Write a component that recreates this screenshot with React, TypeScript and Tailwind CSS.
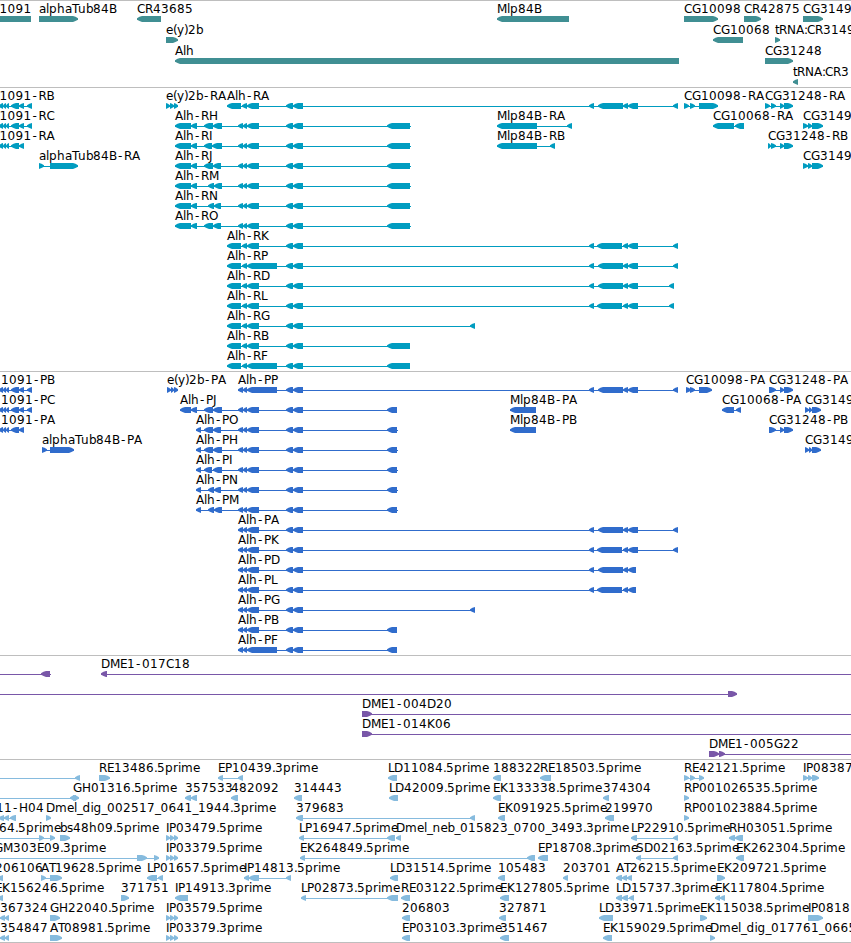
import React from 'react';

type Block = [number, number];

interface Feature {
  name?: string;
  dir: 'l' | 'r';
  blocks: Block[];
  // connector extent, when it runs past the blocks
  from?: number;
  to?: number;
  labelX?: number;
}

interface Track {
  id: string;
  color: string;
  rowClass: string;
  padClass: string;
  rows: Feature[][];
}

const WIDTH = 851;

// glyph advances for the 12px label font
const ADVANCES: Record<string, number> = {
  A: 8, B: 8, C: 8, D: 9, E: 7, F: 7, G: 9, H: 9, I: 3, J: 4, K: 8, L: 6, M: 10,
  N: 9, O: 9, P: 7, R: 8, S: 8, T: 6, a: 7, b: 7, d: 8, e: 7, g: 8, h: 8, i: 3,
  l: 3, m: 12, n: 8, p: 8, r: 5, s: 6, t: 4, u: 8, y: 7, '-': 7, '_': 5.5, '.': 3,
  ':': 3, '(': 4, ')': 4,
};

function glyphPositions(text: string, start: number) {
  const xs: number[] = [];
  let x = start;
  for (const ch of text) {
    // the hyphen sits in the middle of its wide cell
    xs.push(ch === '-' ? x + 1 : x);
    x += ADVANCES[ch] ?? 8;
  }
  return xs.join(' ');
}

const left = (name: string, ...blocks: Block[]): Feature => ({ name, dir: 'l', blocks });
const right = (name: string, ...blocks: Block[]): Feature => ({ name, dir: 'r', blocks });

// shared exons
const MID: Block[] = [[286, 293], [293, 303]];
const INNER: Block[] = [[238, 243], [243, 247], [247, 259], ...MID];
const INNER_LONG: Block[] = [[238, 243], [243, 247], [247, 277], ...MID];
const HEAD: Block[] = [[227, 241], [242, 247], [247, 259], ...MID];
const HEAD_LONG: Block[] = [[227, 241], [242, 247], [247, 277], ...MID];
const FAR_A: Block[] = [[589, 594], [598, 623], [623, 628], [628, 638]];
const FAR_B: Block[] = [[589, 594], [597, 622], [623, 628], [628, 638]];
const FAR_A_CDS: Block[] = [[589, 594], [598, 623], [623, 628], [628, 636]];
const FAR_B_CDS: Block[] = [[589, 594], [597, 622], [623, 628], [628, 636]];
const CG1091: Block[] = [[-1, 3], [3, 6], [6, 9], [11, 19], [19, 24]];
const EY2B: Block[] = [[166, 170], [170, 174], [174, 178]];

const gene1091 = (name: string, labelX: number, long: boolean): Feature => ({
  name,
  dir: 'l',
  blocks: long ? [...CG1091, [27, 32]] : CG1091,
  labelX,
});

const alhR = (name: string, a: Block, b: Block): Feature => ({
  name,
  dir: 'l',
  blocks: [[175, 191], [191, 197], a, b, ...INNER, [387, 410]],
  to: 411,
});

const alhP = (name: string, a: Block, b: Block): Feature => ({
  name,
  dir: 'l',
  blocks: [[196, 201], a, b, ...INNER, [387, 397]],
  to: 398,
});

const genes: Feature[][] = [
  [
    { name: '1091', dir: 'l', blocks: [[-20, 31]], labelX: -0.5 },
    right('alphaTub84B', [39, 78]),
    left('CR43685', [137, 161]),
    left('Mlp84B', [497, 569]),
    right('CG10098', [684, 718]),
    right('CR42875', [744, 761]),
    right('CG3149', [803, 823]),
  ],
  [right('e(y)2b', [166, 178]), left('CG10068', [713, 743]), right('tRNA:CR3149', [775, 780])],
  [left('Alh', [175, 679]), right('CG31248', [765, 793])],
  [left('tRNA:CR3', [793, 798])],
];

const transcripts: Feature[][] = [
  [
    gene1091('1091-RB', -0.5, true),
    right('e(y)2b-RA', ...EY2B),
    left('Alh-RA', ...HEAD, ...FAR_A, [673, 678]),
    right('CG10098-RA', [684, 689], [690, 695], [699, 718]),
    right('CG31248-RA', [765, 770], [771, 776], [780, 784], [784, 793]),
  ],
  [
    gene1091('1091-RC', -0.5, true),
    alhR('Alh-RH', [204, 213], [213, 222]),
    left('Mlp84B-RA', [497, 537], [567, 572]),
    left('CG10068-RA', [713, 734], [735, 744]),
    right('CG3149', [803, 808], [808, 812], [812, 823]),
  ],
  [
    gene1091('1091-RA', -0.5, false),
    alhR('Alh-RI', [204, 212], [212, 222]),
    left('Mlp84B-RB', [497, 537], [550, 555]),
    right('CG31248-RB', [768, 771], [771, 776], [780, 784], [784, 793]),
  ],
  [
    right('alphaTub84B-RA', [39, 44], [50, 78]),
    alhR('Alh-RJ', [204, 213], [213, 221]),
    right('CG3149', [803, 808], [808, 812], [812, 823]),
  ],
  [alhR('Alh-RM', [208, 214], [214, 222])],
  [alhR('Alh-RN', [208, 214], [214, 221])],
  [alhR('Alh-RO', [204, 213], [213, 221])],
  [left('Alh-RK', ...HEAD, ...FAR_B, [673, 678])],
  [left('Alh-RP', ...HEAD_LONG, ...FAR_A, [673, 678])],
  [left('Alh-RD', ...HEAD, ...FAR_A, [669, 674])],
  [left('Alh-RL', ...HEAD, ...FAR_B, [669, 674])],
  [left('Alh-RG', ...HEAD, [470, 475])],
  [left('Alh-RB', ...HEAD, [387, 410])],
  [left('Alh-RF', ...HEAD_LONG, [387, 410])],
];

const proteins: Feature[][] = [
  [
    gene1091('1091-PB', 1, true),
    right('e(y)2b-PA', [167, 171], [171, 174], [174, 178]),
    left('Alh-PP', ...INNER_LONG, ...FAR_A, [673, 678]),
    right('CG10098-PA', [686, 691], [690, 695], [699, 712]),
    right('CG31248-PA', [769, 776], [780, 784], [784, 793]),
  ],
  [
    gene1091('1091-PC', 1, true),
    left('Alh-PJ', [180, 191], [191, 197], [204, 213], [213, 222], ...INNER, [387, 397]),
    left('Mlp84B-PA', [510, 536]),
    left('CG10068-PA', [722, 734], [736, 741]),
    right('CG3149', [805, 809], [809, 812], [812, 821]),
  ],
  [
    gene1091('1091-PA', 1, false),
    alhP('Alh-PO', [204, 213], [213, 221]),
    left('Mlp84B-PB', [510, 536]),
    right('CG31248-PB', [769, 776], [780, 784], [784, 793]),
  ],
  [
    right('alphaTub84B-PA', [42, 47], [50, 74]),
    alhP('Alh-PH', [204, 213], [213, 222]),
    right('CG3149', [805, 809], [809, 812], [812, 821]),
  ],
  [alhP('Alh-PI', [204, 212], [213, 222])],
  [alhP('Alh-PN', [208, 214], [214, 221])],
  [alhP('Alh-PM', [208, 214], [214, 222])],
  [left('Alh-PA', ...INNER, ...FAR_A, [673, 678])],
  [left('Alh-PK', ...INNER, ...FAR_B, [673, 678])],
  [left('Alh-PD', ...INNER, ...FAR_A_CDS)],
  [left('Alh-PL', ...INNER, ...FAR_B_CDS)],
  [left('Alh-PG', ...INNER, [470, 475])],
  [left('Alh-PB', ...INNER, [387, 397])],
  [left('Alh-PF', ...INNER_LONG, [387, 397])],
];

const clones: Feature[][] = [
  [
    { dir: 'l', blocks: [[41, 50]], from: 0, to: 51 },
    { name: 'DME1-017C18', dir: 'l', blocks: [[101, 107]], to: WIDTH },
  ],
  [{ dir: 'r', blocks: [[728, 737]], from: 0 }],
  [{ name: 'DME1-004D20', dir: 'r', blocks: [[362, 372]], to: WIDTH }],
  [{ name: 'DME1-014K06', dir: 'r', blocks: [[362, 372]], to: WIDTH }],
  [{ name: 'DME1-005G22', dir: 'r', blocks: [[709, 719], [719, 725]], to: WIDTH }],
];

const ests: Feature[][] = [
  [
    { dir: 'l', blocks: [[75, 80]], from: 0 },
    right('RE13486.5prime', [99, 110]),
    left('EP10439.3prime', [218, 223], [238, 243]),
    left('LD11084.5prime', [388, 397]),
    left('188322', [493, 501]),
    left('RE18503.5prime', [540, 551]),
    right('RE42121.5prime', [684, 689], [690, 695], [699, 704]),
    right('IP08387', [803, 808], [808, 812], [812, 819]),
  ],
  [
    { dir: 'l', blocks: [[70, 76]], from: 0 },
    right('GH01316.5prime', [73, 79]),
    left('357533', [185, 191], [191, 197]),
    left('482092', [231, 238]),
    left('314443', [294, 302]),
    left('LD42009.5prime', [389, 398]),
    left('EK133338.5prime', [493, 501]),
    left('374304', [603, 609]),
    right('RP001026535.5prime', [684, 689]),
  ],
  [
    { name: '11-H04', dir: 'l', blocks: [[-1, 4], [4, 9], [10, 16]], labelX: -4 },
    right('Dmel_dig_002517_0641_1944.3prime', [46, 51]),
    left('379683', [296, 303], [470, 475]),
    left('EK091925.5prime', [498, 505]),
    left('219970', [605, 614]),
    right('RP001023884.5prime', [684, 689]),
  ],
  [
    { name: '64.5prime', dir: 'r', blocks: [[39, 44], [50, 55]], from: 0, labelX: -1 },
    right('bs48h09.5prime', [60, 70]),
    right('IP03479.5prime', ...EY2B),
    left('LP16947.5prime', [299, 304], [387, 395]),
    left('Dmel_neb_015823_0700_3493.3prime', [396, 401]),
    left('LP22910.5prime', [631, 637], [673, 678]),
    left('RH03051.5prime', [729, 735], [735, 743]),
  ],
  [
    { name: 'GM303E09.3prime', dir: 'r', blocks: [[137, 147], [154, 159]], from: 0, labelX: -6 },
    right('IP03379.5prime', ...EY2B),
    left('EK264849.5prime', [300, 305], [527, 535]),
    left('EP18708.3prime', [538, 548]),
    left('SD02163.5prime', [636, 641], [673, 678]),
    left('EK262304.5prime', [736, 744]),
  ],
  [
    { name: '206106', dir: 'l', blocks: [[-2, 3]], labelX: -5 },
    right('AT19628.5prime', [41, 46], [50, 62]),
    left('LP01657.5prime', [147, 157], [158, 163]),
    left('IP14813.5prime', [244, 249], [249, 259], [286, 291]),
    left('LD31514.5prime', [390, 398]),
    left('105483', [498, 505]),
    left('203701', [563, 568]),
    left('AT26215.5prime', [616, 622], [622, 627], [627, 632]),
    right('EK209721.5prime', [717, 725]),
  ],
  [
    { name: 'EK156246.5prime', dir: 'l', blocks: [[-2, 3]], labelX: -5 },
    right('371751', [121, 129]),
    left('IP14913.3prime', [175, 188]),
    left('LP02873.5prime', [301, 306], [387, 398]),
    left('RE03122.5prime', [401, 410]),
    left('EK127805.5prime', [500, 509]),
    left('LD15737.3prime', [616, 622], [622, 628], [629, 634]),
    left('EK117804.5prime', [715, 720], [720, 725]),
  ],
  [
    left('367324', [0, 5], [5, 9]),
    right('GH22040.5prime', [50, 60]),
    right('IP03579.5prime', ...EY2B),
    left('206803', [402, 410]),
    left('327871', [499, 506]),
    left('LD33971.5prime', [599, 613]),
    right('EK115038.5prime', [700, 707]),
    right('IP0818', [808, 823]),
  ],
  [
    left('354847', [0, 5], [5, 9]),
    right('AT08981.5prime', [50, 62]),
    right('IP03379.3prime', ...EY2B),
    left('EP03103.3prime', [402, 410]),
    left('351467', [500, 509]),
    left('EK159029.5prime', [603, 612]),
    right('Dmel_dig_017761_0665', [710, 715]),
  ],
];

const tracks: Track[] = [
  { id: 'genes', color: '#408f93', rowClass: 'h-[21px]', padClass: 'pb-0.5', rows: genes },
  { id: 'transcripts', color: '#009cc0', rowClass: 'h-5', padClass: 'pb-[3px]', rows: transcripts },
  { id: 'proteins', color: '#306ccc', rowClass: 'h-5', padClass: 'pb-[3px]', rows: proteins },
  { id: 'clones', color: '#7957a8', rowClass: 'h-5', padClass: 'pb-[3px]', rows: clones },
  { id: 'ests', color: '#86bbde', rowClass: 'h-5', padClass: 'pb-0.5', rows: ests },
];

function blockPath([s, e]: Block, dir: 'l' | 'r') {
  const head = Math.min(5, e - s);
  const [tip, base, k] = dir === 'l' ? [s, e, head] : [e, s, -head];
  const shoulder = tip + k;
  const bend = tip + k * 0.5;
  return `M${tip} 17.2Q${bend} 15.6 ${shoulder} 15H${base}V21H${shoulder}Q${bend} 20.4 ${tip} 18.8Z`;
}

function Glyph({ feature, color }: { feature: Feature; color: string }) {
  const { name, dir, blocks } = feature;
  const start = feature.from ?? blocks[0][0];
  const end = feature.to ?? blocks[blocks.length - 1][1];

  return (
    <g>
      <g fill={color}>
        <rect x={start} y={18} width={end - start} height={1} shapeRendering="crispEdges" />
        {blocks.map((b, i) => (
          <path key={i} d={blockPath(b, dir)} />
        ))}
      </g>
      {name && (
        <text x={glyphPositions(name, feature.labelX ?? blocks[0][0])} y={12} fill="#000">
          {name}
        </text>
      )}
    </g>
  );
}

function TrackPanel({ track }: { track: Track }) {
  return (
    <section className={`border-t border-[#bebebe] ${track.padClass}`}>
      {track.rows.map((row, i) => (
        <div key={i} className={track.rowClass}>
          <svg width={WIDTH} height={20} className="block overflow-visible">
            {row.map((feature, j) => (
              <Glyph key={j} feature={feature} color={track.color} />
            ))}
          </svg>
        </div>
      ))}
    </section>
  );
}

function App() {
  return (
    <main className="w-[851px] overflow-hidden border-b border-[#bebebe] bg-white font-['DejaVu_Sans',sans-serif] text-[12px]">
      {tracks.map((track) => (
        <TrackPanel key={track.id} track={track} />
      ))}
    </main>
  );
}

export default App;
